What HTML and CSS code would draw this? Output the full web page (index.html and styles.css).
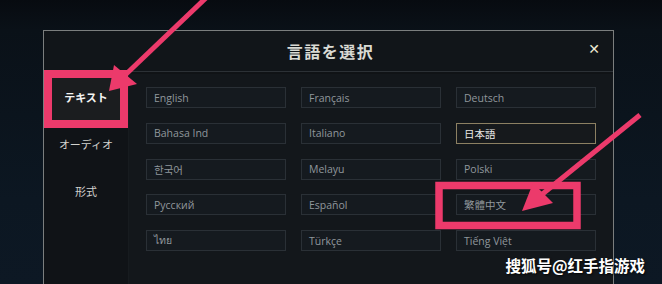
FILE: index.html
```html
<!DOCTYPE html>
<html lang="ja">
<head>
<meta charset="utf-8">
<link rel="stylesheet" href="styles.css">
</head>
<body>
<div class="stage">
  <div class="dialog">
    <div class="header">
      <div class="title">言語を選択</div>
      <div class="close">✕</div>
    </div>
    <div class="body">
      <div class="sidebar">
        <div class="tab active">テキスト</div>
        <div class="tab">オーディオ</div>
        <div class="tab">形式</div>
      </div>
      <div class="main">
        <div class="grid">
          <div class="cell">English</div>
          <div class="cell">Français</div>
          <div class="cell">Deutsch</div>
          <div class="cell">Bahasa Ind</div>
          <div class="cell">Italiano</div>
          <div class="cell selected">日本語</div>
          <div class="cell">한국어</div>
          <div class="cell">Melayu</div>
          <div class="cell">Polski</div>
          <div class="cell">Русский</div>
          <div class="cell">Español</div>
          <div class="cell">繁體中文</div>
          <div class="cell">ไทย</div>
          <div class="cell">Türkçe</div>
          <div class="cell">Tiếng Việt</div>
        </div>
      </div>
    </div>
  </div>
  <svg class="marks" width="662" height="284" viewBox="0 0 662 284">
    <g fill="none" stroke="#ec3a6b">
      <rect x="48" y="74" width="76" height="50" stroke-width="8"/>
      <rect x="439" y="185.5" width="138" height="40" stroke-width="7.5"/>
      <line x1="208" y1="-4" x2="122" y2="78" stroke-width="5"/>
      <line x1="640" y1="115" x2="540" y2="196" stroke-width="5"/>
    </g>
    <g fill="#ec3a6b">
      <polygon points="109,91 114,65 137,84"/>
      <polygon points="522,211 533,183 553,203"/>
    </g>
  </svg>
  <div class="watermark">搜狐号@红手指游戏</div>
</div>
</body>
</html>
```
FILE: styles.css
```css
html, body {
  margin: 0;
  padding: 0;
}
body {
  width: 662px;
  height: 284px;
  overflow: hidden;
  background: #090e14;
  font-family: "Open Sans", "Noto Sans CJK JP", sans-serif;
}
.stage {
  position: relative;
  width: 662px;
  height: 284px;
  overflow: hidden;
  background: linear-gradient(180deg, #070b10 0px, #0a1118 30px, #0c1722 200px, #0d1824 284px);
  padding-top: 30px;
  box-sizing: border-box;
}
.dialog {
  margin-left: 43px;
  width: 571px;
  height: 280px;
  box-sizing: border-box;
  border: 1px solid #7b7e7e;
  border-bottom: none;
  background: #13171b;
}
.header {
  height: 40px;
  border-bottom: 1px solid #2c3136;
  box-shadow: 0 2px 0 #101316;
  display: flex;
  align-items: center;
  justify-content: center;
  position: relative;
  background: #111519;
}
.title {
  font-family: "Noto Sans CJK JP", sans-serif;
  font-size: 16px;
  font-weight: 700;
  color: #d9dad4;
  letter-spacing: 1.5px;
  margin-left: 4px;
}
.close {
  position: absolute;
  right: 13px;
  top: 10px;
  font-size: 14px;
  font-weight: 700;
  color: #ece8d2;
  font-family: "DejaVu Sans", sans-serif;
}
.body {
  display: flex;
  height: 239px;
  padding-top: 1px;
}
.sidebar {
  width: 84px;
  background: #101317;
  display: flex;
  flex-direction: column;
  border-right: 1px solid #171b1f;
}
.tab {
  height: 47px;
  display: flex;
  align-items: center;
  justify-content: center;
  font-family: "Noto Sans CJK JP", sans-serif;
  font-size: 11px;
  color: #d2d2ce;
}
.tab.active {
  background: #1b1d1f;
  color: #f4f4f2;
  font-weight: 700;
}
.main {
  flex: 1;
  padding: 14px 0 0 17px;
}
.grid {
  display: grid;
  grid-template-columns: repeat(3, 140px);
  grid-auto-rows: 21px;
  column-gap: 15px;
  row-gap: 14.75px;
}
.cell {
  box-sizing: border-box;
  border: 1px solid #2a3036;
  background: #151a1f;
  color: #90979c;
  font-size: 10.5px;
  padding-left: 7px;
  display: flex;
  align-items: center;
  font-family: "Open Sans", "Noto Sans CJK JP", "Noto Sans CJK KR", "DejaVu Sans", sans-serif;
}
.cell.selected {
  border-color: #8c8062;
  color: #ebebe8;
  background: #16191c;
}
.marks {
  position: absolute;
  left: 0;
  top: 0;
}
.watermark {
  position: absolute;
  right: 17px;
  top: 255px;
  font-family: "Noto Sans CJK SC", sans-serif;
  font-size: 15.5px;
  line-height: 20px;
  font-weight: 700;
  color: #ffffff;
  text-shadow: 1px 1px 2px rgba(0,0,0,0.8);
}
```
